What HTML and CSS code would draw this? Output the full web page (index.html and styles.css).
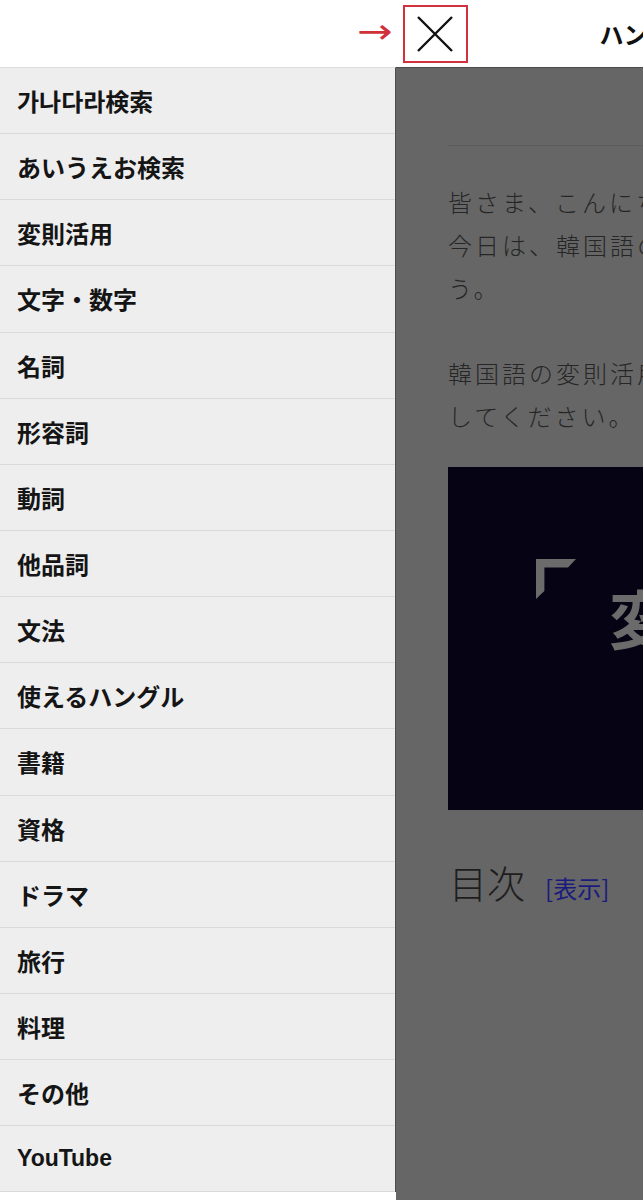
FILE: index.html
```html
<!DOCTYPE html>
<html lang="ja">
<head>
    <meta charset="UTF-8">
    <meta name="viewport" content="width=device-width, initial-scale=1.0">
    <title>ハングル</title>
    <link rel="stylesheet" href="styles.css">
</head>
<body>
    <header class="topbar">
        <span class="arrow">→</span>
        <button class="close-btn" aria-label="閉じる">
            <svg width="38" height="38" viewBox="0 0 38 38">
                <path d="M2 2 L36 36 M36 2 L2 36" stroke="#111" stroke-width="2.4" fill="none"/>
            </svg>
        </button>
        <span class="site-title">ハングル</span>
    </header>

    <div class="layout">
        <nav class="sidebar">
            <a class="menu-item" href="#">가나다라検索</a>
            <a class="menu-item" href="#">あいうえお検索</a>
            <a class="menu-item" href="#">変則活用</a>
            <a class="menu-item" href="#">文字・数字</a>
            <a class="menu-item" href="#">名詞</a>
            <a class="menu-item" href="#">形容詞</a>
            <a class="menu-item" href="#">動詞</a>
            <a class="menu-item" href="#">他品詞</a>
            <a class="menu-item" href="#">文法</a>
            <a class="menu-item" href="#">使えるハングル</a>
            <a class="menu-item" href="#">書籍</a>
            <a class="menu-item" href="#">資格</a>
            <a class="menu-item" href="#">ドラマ</a>
            <a class="menu-item" href="#">旅行</a>
            <a class="menu-item" href="#">料理</a>
            <a class="menu-item" href="#">その他</a>
            <a class="menu-item latin" href="#">YouTube</a>
        </nav>

        <main class="content">
            <hr class="rule">
            <p class="para">皆さま、こんにちは。<br>今日は、韓国語の変則活用を見ていきましょ<br>う。</p>
            <p class="para">韓国語の変則活用の一覧表として活用<br>してください。</p>
            <div class="eyecatch">
                <!-- corner bracket of the title card -->
                <span class="corner" aria-hidden="true"></span>
                <span class="big">変則活用</span>
            </div>
            <div class="toc">
                <span class="toc-title">目次</span>
                <a class="toc-toggle" href="#">[表示]</a>
            </div>
        </main>
    </div>
</body>
</html>
```

FILE: styles.css
```css
html, body {
    overflow-x: hidden;
}

body {
    margin: 0;
    padding: 0;
    background: #fff;
    color: #222;
    font-family: "Liberation Sans", "Noto Sans CJK JP", sans-serif;
}

.topbar {
    height: 67px;
    display: flex;
    align-items: center;
    padding-left: 357px;
    background: #fff;
    white-space: nowrap;
    overflow: hidden;
}

.arrow {
    flex-shrink: 0;
    color: #d0313a;
    font-size: 34px;
    line-height: 1;
    margin-top: -5px;
    transform: scaleX(1.25);
    transform-origin: left center;
    font-family: "DejaVu Sans", sans-serif;
}

.close-btn {
    flex-shrink: 0;
    width: 65px;
    height: 58px;
    margin-left: 17px;
    border: 2px solid #d0313a;
    background: #fff;
    padding: 0;
    display: flex;
    align-items: center;
    justify-content: center;
    box-sizing: border-box;
}

.site-title {
    flex-shrink: 0;
    margin-left: 132px;
    font-size: 24px;
    font-weight: bold;
    color: #111;
}

.layout {
    display: flex;
    min-height: 1133px;
}

.sidebar {
    width: 395px;
    flex-shrink: 0;
    border-right: 1px solid #4e4e4e;
    border-top: 1px solid #ddd;
    align-self: flex-start;
    background: #fff;
}

.menu-item {
    display: flex;
    align-items: center;
    height: 65.15px;
    padding-left: 17px;
    background: #eee;
    border-bottom: 1px solid #dadada;
    color: #151515;
    font-size: 24px;
    font-weight: bold;
    text-decoration: none;
}

.menu-item.latin {
    font-size: 23px;
}

.content {
    flex: 1;
    background: #666;
    border-top: 1px solid #4a4a4a;
    padding-left: 52px;
    white-space: nowrap;
    overflow: hidden;
}

.rule {
    margin: 77px 0 0;
    border: 0;
    border-top: 1px solid #5c5c5c;
}

.para {
    margin: 34px 0 0;
    font-family: "Noto Sans CJK JP", sans-serif;
    font-weight: 300;
    font-size: 24px;
    line-height: 43px;
    letter-spacing: 3px;
    color: #262626;
}

.para + .para {
    margin-top: 42px;
}

.eyecatch {
    margin-top: 30px;
    width: 420px;
    height: 343px;
    background: #060314;
    display: flex;
    align-items: flex-start;
    padding: 92px 0 0 88px;
    box-sizing: border-box;
    font-family: "Noto Sans CJK JP", sans-serif;
    color: #6b6b6b;
}

.corner {
    flex-shrink: 0;
    width: 40px;
    height: 40px;
    background: #6b6b6b;
    clip-path: polygon(0 0, 100% 0, 80% 21%, 21% 21%, 21% 80%, 0 100%);
}

.big {
    font-size: 64px;
    font-weight: bold;
    line-height: 1;
    margin-top: 25px;
    margin-left: 33px;
}

.toc {
    margin-top: 44px;
    display: flex;
    align-items: baseline;
    font-family: "Noto Sans CJK JP", sans-serif;
}

.toc-title {
    font-size: 38px;
    font-weight: 300;
    color: #1e1e1e;
    margin-left: 1px;
}

.toc-toggle {
    margin-left: 20px;
    font-size: 24px;
    color: #1b1b7e;
    text-decoration: none;
}
```
